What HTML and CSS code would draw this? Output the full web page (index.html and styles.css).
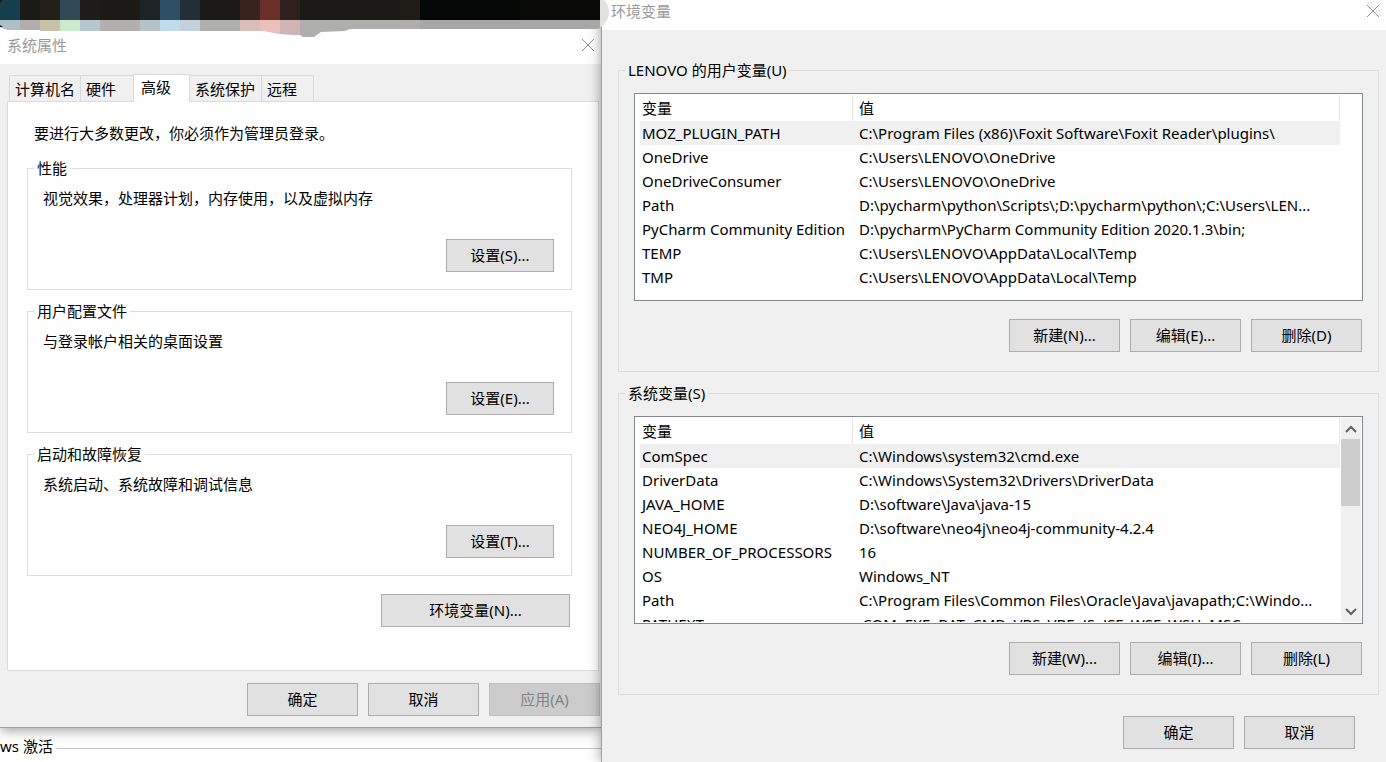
FILE: index.html
```html
<!DOCTYPE html>
<html lang="zh-CN">
<head>
<meta charset="utf-8">
<title>环境变量</title>
<link rel="stylesheet" href="styles.css">
</head>
<body>
<div class="desktop">
  <div class="left">
    <svg class="mosaic" width="610" height="38" viewBox="0 0 610 38" aria-hidden="true">
      <defs><clipPath id="edge"><path d="M0 0H601V28L596 29H350L345 31L321 32L314 37H303L300 35L280 34L265 31H40V30H8L0 27Z"/></clipPath></defs>
      <g clip-path="url(#edge)">
        <rect width="601" height="20" fill="#1c1a16"/>
        <rect width="20" height="20" fill="#17404f"/>
        <rect x="40" width="20" height="20" fill="#23201a"/>
        <rect x="60" width="20" height="20" fill="#2f4a55"/>
        <rect x="80" width="20" height="20" fill="#1f1b19"/>
        <rect x="140" width="20" height="20" fill="#202323"/>
        <rect x="160" width="20" height="20" fill="#2c4f66"/>
        <rect x="180" width="20" height="20" fill="#232f36"/>
        <rect x="240" width="20" height="20" fill="#38231f"/>
        <rect x="260" width="20" height="20" fill="#6c302b"/>
        <rect x="280" width="20" height="20" fill="#2f201d"/>
        <rect x="400" width="20" height="20" fill="#201d19"/>
        <rect x="420" width="100" height="20" fill="#060807"/>
        <rect x="520" width="81" height="20" fill="#090908"/>
        <rect y="20" width="601" height="18" fill="#afafad"/>
        <rect y="20" width="20" height="18" fill="#adbfc8"/>
        <rect x="20" y="20" width="20" height="18" fill="#b2aeae"/>
        <rect x="40" y="20" width="20" height="18" fill="#c9c2aa"/>
        <rect x="60" y="20" width="20" height="18" fill="#cbe9cd"/>
        <rect x="80" y="20" width="20" height="18" fill="#b7c7d0"/>
        <rect x="100" y="20" width="40" height="18" fill="#b2afae"/>
        <rect x="140" y="20" width="20" height="18" fill="#b7c2c8"/>
        <rect x="160" y="20" width="20" height="18" fill="#c1daec"/>
        <rect x="180" y="20" width="20" height="18" fill="#c2d1dc"/>
        <rect x="240" y="20" width="20" height="18" fill="#d9bdb9"/>
        <rect x="260" y="20" width="20" height="18" fill="#ebbfbb"/>
        <rect x="280" y="20" width="20" height="18" fill="#cfb4b3"/>
        <rect x="420" y="20" width="181" height="18" fill="#a7a7a7"/>
        <path d="M0 0H3L0 3Z" fill="#1c1a16"/>
        <path d="M0 25L3 27H0Z" fill="#1c1a16"/>
      </g>
      <path d="M600 0H604Q609 5 609 12T604 24L600 28Z" fill="#e1e1df"/>
    </svg>
    <section class="dialog properties">
      <header class="titlebar titlebar-tall">
        <h1 class="title">系统属性</h1>
        <button class="close" aria-label="关闭"><svg width="14" height="14" viewBox="0 0 14 14"><path d="M1 1L13 13M13 1L1 13"/></svg></button>
      </header>
      <div class="properties-body">
        <div class="tabs" role="tablist">
          <button class="tab tab-wide" role="tab">计算机名</button>
          <button class="tab" role="tab">硬件</button>
          <button class="tab tab-active" role="tab" aria-selected="true">高级</button>
          <button class="tab tab-wide" role="tab">系统保护</button>
          <button class="tab" role="tab">远程</button>
        </div>
        <div class="panel" role="tabpanel">
          <p class="notice">要进行大多数更改，你必须作为管理员登录。</p>
          <div class="groups">
            <fieldset class="group">
              <legend>性能</legend>
              <p class="group-text">视觉效果，处理器计划，内存使用，以及虚拟内存</p>
              <button class="btn">设置(S)...</button>
            </fieldset>
            <fieldset class="group">
              <legend>用户配置文件</legend>
              <p class="group-text">与登录帐户相关的桌面设置</p>
              <button class="btn">设置(E)...</button>
            </fieldset>
            <fieldset class="group">
              <legend>启动和故障恢复</legend>
              <p class="group-text">系统启动、系统故障和调试信息</p>
              <button class="btn">设置(T)...</button>
            </fieldset>
          </div>
          <button class="btn btn-env">环境变量(N)...</button>
        </div>
        <footer class="actions actions-left">
          <button class="btn">确定</button>
          <button class="btn">取消</button>
          <button class="btn" disabled>应用(A)</button>
        </footer>
      </div>
    </section>
    <div class="activation"><span>ws 激活</span></div>
  </div>

  <section class="dialog environment">
    <header class="titlebar">
      <h1 class="title">环境变量</h1>
      <button class="close" aria-label="关闭"><svg width="14" height="14" viewBox="0 0 14 14"><path d="M1 1L13 13M13 1L1 13"/></svg></button>
    </header>
    <div class="environment-body">
      <fieldset class="vars">
        <legend>LENOVO 的用户变量(U)</legend>
        <div class="list">
          <div class="list-view">
            <table>
              <thead><tr><th class="name">变量</th><th>值</th></tr></thead>
              <tbody>
                <tr class="selected"><td>MOZ_PLUGIN_PATH</td><td>C:\Program Files (x86)\Foxit Software\Foxit Reader\plugins\</td></tr>
                <tr><td>OneDrive</td><td>C:\Users\LENOVO\OneDrive</td></tr>
                <tr><td>OneDriveConsumer</td><td>C:\Users\LENOVO\OneDrive</td></tr>
                <tr><td>Path</td><td>D:\pycharm\python\Scripts\;D:\pycharm\python\;C:\Users\LEN...</td></tr>
                <tr><td>PyCharm Community Edition</td><td>D:\pycharm\PyCharm Community Edition 2020.1.3\bin;</td></tr>
                <tr><td>TEMP</td><td>C:\Users\LENOVO\AppData\Local\Temp</td></tr>
                <tr><td>TMP</td><td>C:\Users\LENOVO\AppData\Local\Temp</td></tr>
              </tbody>
            </table>
          </div>
          <div class="gutter"></div>
        </div>
        <div class="actions">
          <button class="btn">新建(N)...</button>
          <button class="btn">编辑(E)...</button>
          <button class="btn">删除(D)</button>
        </div>
      </fieldset>
      <fieldset class="vars">
        <legend>系统变量(S)</legend>
        <div class="list">
          <div class="list-view">
            <table>
              <thead><tr><th class="name">变量</th><th>值</th></tr></thead>
              <tbody>
                <tr class="selected"><td>ComSpec</td><td>C:\Windows\system32\cmd.exe</td></tr>
                <tr><td>DriverData</td><td>C:\Windows\System32\Drivers\DriverData</td></tr>
                <tr><td>JAVA_HOME</td><td>D:\software\Java\java-15</td></tr>
                <tr><td>NEO4J_HOME</td><td>D:\software\neo4j\neo4j-community-4.2.4</td></tr>
                <tr><td>NUMBER_OF_PROCESSORS</td><td>16</td></tr>
                <tr><td>OS</td><td>Windows_NT</td></tr>
                <tr><td>Path</td><td>C:\Program Files\Common Files\Oracle\Java\javapath;C:\Windo...</td></tr>
                <tr><td>PATHEXT</td><td>.COM;.EXE;.BAT;.CMD;.VBS;.VBE;.JS;.JSE;.WSF;.WSH;.MSC</td></tr>
              </tbody>
            </table>
          </div>
          <div class="gutter scrollbar">
            <button class="arrow" aria-label="向上滚动"><svg width="12" height="8" viewBox="0 0 12 8"><path d="M1 7L6 2L11 7"/></svg></button>
            <div class="thumb"></div>
            <button class="arrow arrow-down" aria-label="向下滚动"><svg width="12" height="8" viewBox="0 0 12 8"><path d="M1 1L6 6L11 1"/></svg></button>
          </div>
        </div>
        <div class="actions">
          <button class="btn">新建(W)...</button>
          <button class="btn">编辑(I)...</button>
          <button class="btn">删除(L)</button>
        </div>
      </fieldset>
      <footer class="actions actions-right">
        <button class="btn">确定</button>
        <button class="btn">取消</button>
      </footer>
    </div>
  </section>
</div>
</body>
</html>
```
FILE: styles.css
```css
* { box-sizing: border-box; }
body {
  margin: 0;
  background: #fff;
  color: #000;
  font: 15px/20px "Noto Sans", "Noto Sans CJK SC", sans-serif;
}
button {
  font: inherit;
  color: inherit;
  padding: 0;
  border: 0;
  background: none;
}
p { margin: 0; }
fieldset {
  min-width: 0;
  margin: 0;
  border: 1px solid #dcdcdc;
}
legend {
  margin-left: -9px;
  padding: 0 3px;
}

.desktop {
  display: grid;
  grid-template-columns: minmax(0, 601fr) minmax(0, 785fr);
  min-height: 100vh;
  overflow: hidden;
}
.left {
  position: relative;
  display: flex;
  flex-direction: column;
  padding-top: 28px;
}
.mosaic {
  position: absolute;
  top: 0;
  left: 0;
  z-index: 3;
}
.dialog { background: #f0f0f0; }
.properties {
  border-bottom: 1px solid #a0a0a0;
  box-shadow: 0 2px 12px rgba(0, 0, 0, .4);
}
.titlebar {
  display: flex;
  align-items: center;
  justify-content: space-between;
  height: 30px;
  padding: 0 6px 8px 9px;
  background: #fff;
}
.titlebar-tall {
  height: 36px;
  padding: 0 6px 3px 7px;
}
.title {
  margin: 0;
  font-size: 15px;
  font-weight: 400;
  color: #999;
}
.close {
  display: flex;
}
.close svg {
  fill: none;
  stroke: #909090;
}

.properties-body { padding: 10px 2px 11px 7px; }
.tabs {
  display: flex;
  align-items: flex-end;
  padding-left: 2px;
}
.tab {
  width: 53px;
  height: 26px;
  padding-left: 5px;
  text-align: left;
  border: 1px solid #d9d9d9;
  border-width: 1px 0 0 1px;
}
.tab-wide { width: 71px; }
.tab:last-child { border-right-width: 1px; }
.tab-active {
  z-index: 1;
  width: 57px;
  height: 28px;
  margin-bottom: -1px;
  padding: 0 0 3px 7px;
  border-right-width: 1px;
  background: #fff;
}
.tab-active + .tab { border-left: 0; }
.panel {
  display: flex;
  flex-direction: column;
  padding: 21px 26px 43px 19px;
  border: 1px solid #dcdcdc;
  background: #fff;
}
.notice { padding-left: 7px; }
.groups {
  display: grid;
  gap: 11px;
  padding-top: 15px;
}
.group {
  display: flex;
  flex-direction: column;
  padding: 10px 17px 17px 15px;
}
.group .btn {
  width: 108px;
  align-self: flex-end;
  margin-top: 31px;
}
.btn {
  width: 111px;
  height: 33px;
  padding-bottom: 2px;
  border: 1px solid #adadad;
  background: #e1e1e1;
  text-align: center;
}
.btn:disabled {
  border-color: #bfbfbf;
  background: #ccc;
  color: #838383;
}
.btn-env {
  align-self: flex-end;
  width: 189px;
  margin: 18px 2px 0 0;
}
.actions {
  display: flex;
  justify-content: flex-end;
  gap: 10px;
}
.actions-left {
  padding-top: 12px;
  margin-right: -1px;
}
.activation {
  display: flex;
  align-items: center;
  gap: 3px;
  padding-top: 8px;
}
.activation::after {
  content: "";
  flex: 1;
  margin-top: 5px;
  border-top: 1px solid #c8c8c8;
}

.environment {
  z-index: 2;
  border-left: 1px solid #a0a0a0;
  box-shadow: 0 0 12px rgba(0, 0, 0, .4);
}
.environment-body { padding: 30px 7px 12px 16px; }
.vars {
  padding: 13px 15px 19px;
}
.vars + .vars { margin-top: 11px; }
.list {
  display: flex;
  height: 208px;
  margin-bottom: 18px;
  padding: 1px 1px 1px 5px;
  border: 1px solid #828790;
  background: #fff;
}
.list-view {
  flex: 1;
  min-width: 0;
  overflow: hidden;
}
.gutter {
  width: 20px;
  margin-left: 1px;
}
table {
  width: 100%;
  table-layout: fixed;
  border-collapse: separate;
  border-spacing: 0;
}
th, td {
  height: 24px;
  padding: 0 0 0 6px;
  text-align: left;
  font-weight: 400;
  white-space: nowrap;
  overflow: hidden;
}
th {
  height: 26px;
  border-right: 1px solid #e5e5e5;
}
th:first-child, td:first-child { padding-left: 2px; }
.name { width: 213px; }
.selected { background: #f0f0f0; }
.scrollbar {
  display: flex;
  flex-direction: column;
  background: #f0f0f0;
}
.arrow {
  display: flex;
  align-items: center;
  justify-content: center;
  height: 21px;
}
.arrow svg {
  fill: none;
  stroke: #606060;
  stroke-width: 2;
}
.arrow-down { margin-top: auto; }
.thumb {
  height: 67px;
  margin-right: 1px;
  background: #cdcdcd;
}
.vars .actions { padding-right: 1px; }
.actions-right { padding: 21px 24px 0 0; }
```
